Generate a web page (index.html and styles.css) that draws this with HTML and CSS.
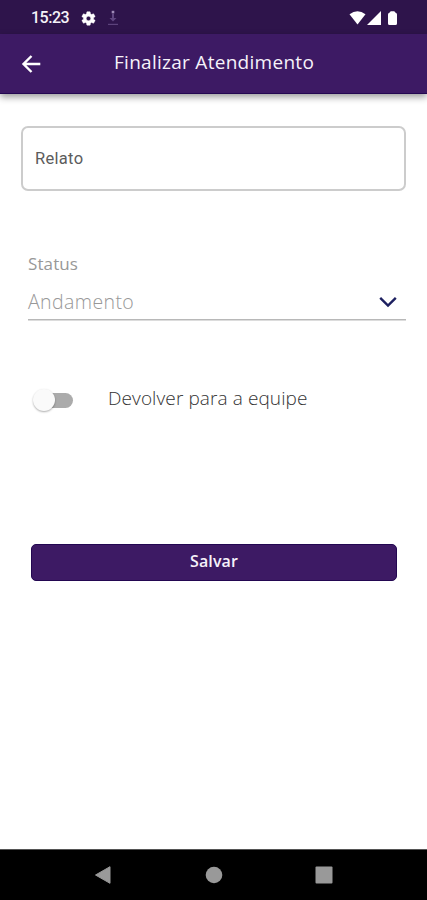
FILE: index.html
```html
<!DOCTYPE html>
<html lang="pt-BR">
<head>
<meta charset="utf-8">
<title>Finalizar Atendimento</title>
<link rel="stylesheet" href="styles.css">
</head>
<body>
<div class="screen">
  <div class="status-bar">
    <span class="clock">15:23</span>
    <svg class="gear" width="17" height="17" viewBox="0 0 24 24"><path fill="#fff" stroke="#fff" stroke-width=".6" d="M19.14 12.94c.04-.3.06-.61.06-.94s-.02-.64-.07-.94l2.03-1.58a.49.49 0 0 0 .12-.61l-1.92-3.32a.49.49 0 0 0-.59-.22l-2.39.96a7 7 0 0 0-1.62-.94l-.36-2.54a.48.48 0 0 0-.48-.41h-3.84a.48.48 0 0 0-.47.41l-.36 2.54c-.59.24-1.13.57-1.62.94l-2.39-.96a.48.48 0 0 0-.59.22L2.74 8.87a.48.48 0 0 0 .12.61l2.03 1.58a6 6 0 0 0 0 1.88l-2.03 1.58a.49.49 0 0 0-.12.61l1.92 3.32c.12.22.37.29.59.22l2.39-.96c.5.38 1.03.7 1.62.94l.36 2.54c.05.24.24.41.48.41h3.84c.24 0 .44-.17.47-.41l.36-2.54a7 7 0 0 0 1.62-.94l2.39.96c.22.08.47 0 .59-.22l1.92-3.32a.48.48 0 0 0-.12-.61zM12 15.2a3.2 3.2 0 1 1 0-6.4 3.2 3.2 0 0 1 0 6.4z"/></svg>
    <svg class="download" width="12" height="17" viewBox="0 0 12 17"><path fill="#604681" d="M5 5h2v4h2.500L6 12.500 2.500 9H5z"/><rect x="4.700" y="1.800" width="2.600" height="2.600" fill="#a08cb8"/><rect x="1" y="14.800" width="10" height="1.200" fill="#5d437c"/></svg>
    <svg class="signals" width="50" height="16" viewBox="0 0 50 16"><g fill="#fff"><path d="M.5 4.200Q8.500-1.600 16.500 4.200L8.500 14.500z"/><path d="M18 15 32 1v14z"/><path d="M39 4.500q0-1.500 1.700-2l1-1.300h3.600l1 1.300q1.700.5 1.700 2v9q0 1.500-1.500 1.500h-6Q39 15 39 13.500z"/></g></svg>
  </div>
  <header class="app-bar">
    <svg class="back" width="20" height="20" viewBox="0 0 20 20" fill="none" stroke="#fff" stroke-width="2.400"><path d="M19.300 10H3M10.500 2 2.500 10l8 8"/></svg>
    <h1 class="title">Finalizar Atendimento</h1>
  </header>
  <main class="content">
    <div class="report"><span>Relato</span></div>
    <div class="select">
      <span class="select-label">Status</span>
      <div class="select-row">
        <span class="select-value">Andamento</span>
        <svg width="18" height="12" viewBox="0 0 18 12" fill="none" stroke="#1d2060" stroke-width="2.400"><path d="m1.200 1.800 7.800 7.700 7.800-7.700"/></svg>
      </div>
    </div>
    <div class="switch-row">
      <span class="switch"><span class="thumb"></span></span>
      <span class="switch-label">Devolver para a equipe</span>
    </div>
    <button class="save"><span>Salvar</span></button>
  </main>
  <nav class="nav-bar">
    <svg width="18" height="20" viewBox="0 0 18 20"><path fill="#999" stroke="#999" stroke-linejoin="round" d="M1.500 10 16 1.700v16.600z"/></svg>
    <svg width="18" height="20" viewBox="0 0 18 20"><circle cx="9" cy="10" r="8.300" fill="#999"/></svg>
    <svg width="18" height="20" viewBox="0 0 18 20"><rect x=".5" y="1.500" width="17" height="17" rx="1" fill="#999"/></svg>
  </nav>
</div>
</body>
</html>
```
FILE: styles.css
```css
* { box-sizing: border-box; }
body { margin: 0; background: #fff; font-family: "Open Sans", sans-serif; }
.screen { width: 427px; height: 900px; display: flex; flex-direction: column; overflow: hidden; }
.status-bar { height: 34px; flex: none; background: #2e144b; display: flex; align-items: center; padding: 2px 28px 0 31px; }
.clock { width: 49px; font: 500 16px/20px Roboto, sans-serif; color: #f5f2f8; letter-spacing: -0.5px; }
.download { margin-left: 10px; margin-top: -2px; }
.signals { margin-left: auto; }
.app-bar { height: 60px; flex: none; background: #3d1a64; border-bottom: 1px solid #230751; box-shadow: 0 3px 7px rgba(0, 0, 0, .4); display: flex; align-items: center; padding-left: 21px; }
.title { margin: 0 0 3px 73px; font-size: 19px; line-height: 26px; font-weight: 400; color: #f6f2fa; letter-spacing: .28px; white-space: nowrap; }
.content { flex: 1; display: flex; flex-direction: column; padding: 32px 21px 0; }
.report { height: 65px; border: 2px solid #ccc; border-radius: 7px; display: flex; align-items: center; padding: 1px 0 0 12px; font: 16.500px/20px Roboto, sans-serif; color: #5c5c5c; letter-spacing: .3px; }
.select { margin: 61px 0 0 7px; height: 68px; border-bottom: 1px solid #b8b8b8; box-shadow: 0 1px 0 #dcdcdc; color: #989898; }
.select-label { display: block; font-size: 17px; line-height: 24px; font-weight: 400; letter-spacing: .1px; }
.select-row { display: flex; justify-content: space-between; align-items: center; margin-top: 12px; padding-right: 9px; }
.select-value { font-size: 19.500px; line-height: 28px; font-weight: 350; letter-spacing: .4px; }
.switch-row { display: flex; align-items: center; margin-top: 64px; height: 30px; padding-left: 18px; }
.switch { width: 34px; height: 15px; margin-top: 2px; border-radius: 8px; background: #ababab; display: flex; align-items: center; }
.thumb { flex: none; width: 22px; height: 22px; margin-left: -6px; border-radius: 50%; background: #fafafa; box-shadow: 0 1px 2px rgba(0, 0, 0, .32); }
.switch-label { margin: -3px 0 0 35px; font-size: 19px; line-height: 28px; color: #333; font-weight: 350; letter-spacing: .1px; white-space: nowrap; }
.save { margin: 130px 9px 0 10px; height: 37px; padding: 0 0 3px; border: 1px solid #230751; border-radius: 5px; background: #3d1a64; color: #f6f2fa; font: 600 16px/24px "Open Sans", sans-serif; letter-spacing: .1px; }
.nav-bar { height: 51px; flex: none; background: #000; border-top: 1px solid #555; display: flex; align-items: center; justify-content: space-between; padding: 0 94px 1px; }
```
